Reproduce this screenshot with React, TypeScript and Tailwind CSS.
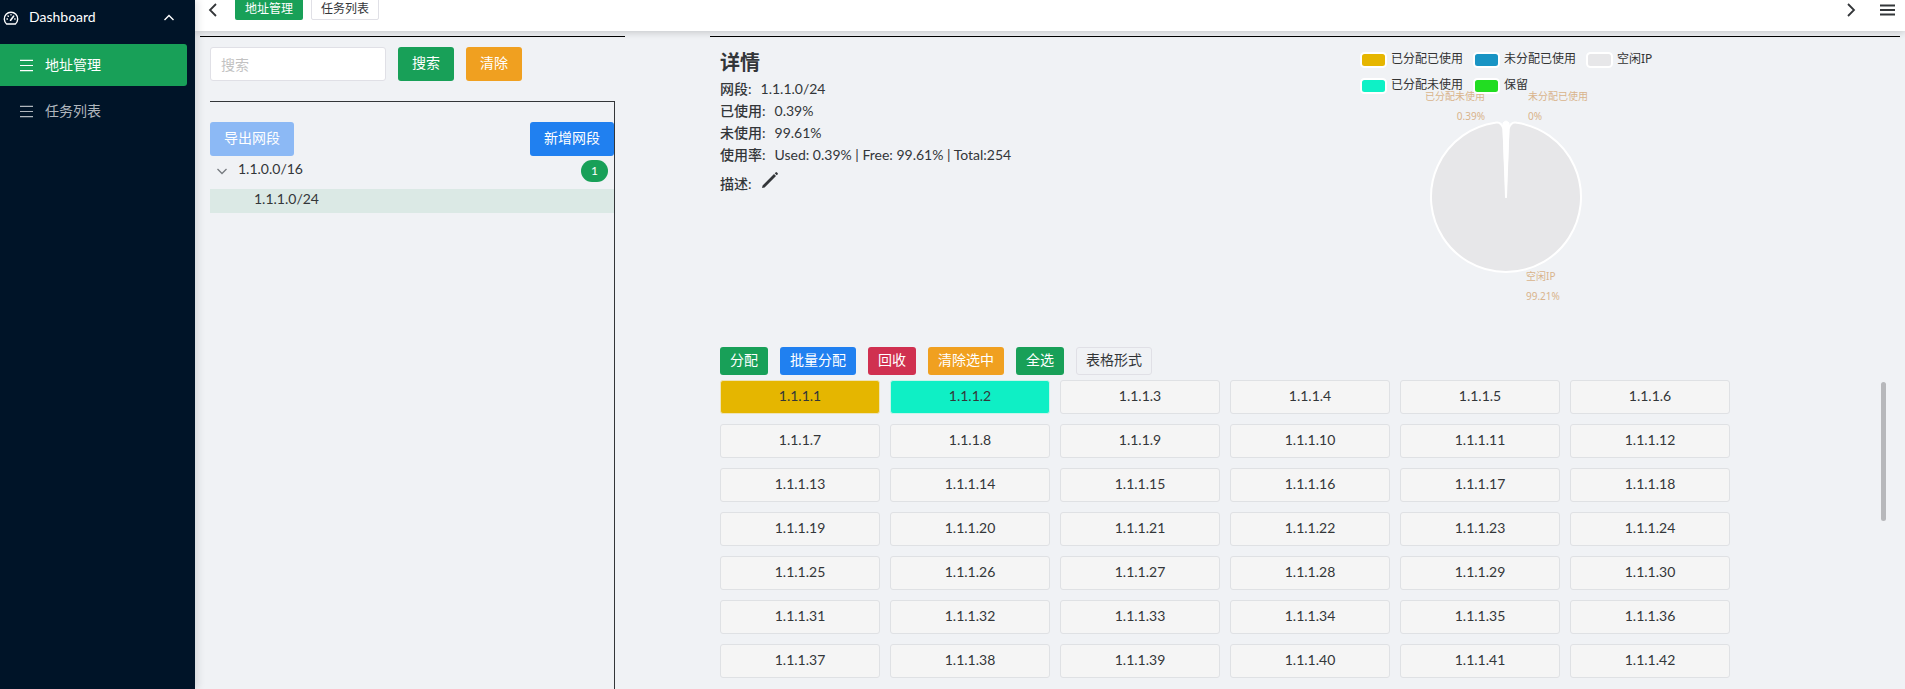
import { useState } from "react";

const hosts = Array.from({ length: 42 }, (_, i) => `1.1.1.${i + 1}`);

const usage = [
  { label: "网段:", value: "1.1.1.0/24" },
  { label: "已使用:", value: "0.39%" },
  { label: "未使用:", value: "99.61%" },
  { label: "使用率:", value: "Used: 0.39% | Free: 99.61% | Total:254" },
];

const actions = [
  { label: "分配", tone: "bg-[#18a058] text-white" },
  { label: "批量分配", tone: "bg-[#2080f0] text-white" },
  { label: "回收", tone: "bg-[#d03050] text-white" },
  { label: "清除选中", tone: "bg-[#f0a020] text-white" },
  { label: "全选", tone: "bg-[#18a058] text-white" },
  { label: "表格形式", tone: "outline -outline-offset-1 outline-[#e0e0e6] text-[#333639]" },
];

const legend = [
  { x: 2, y: 22, color: "#e6b600", label: "已分配已使用" },
  { x: 115, y: 22, color: "#1994c4", label: "未分配已使用" },
  { x: 228, y: 22, color: "#e7e7e9", label: "空闲IP" },
  { x: 2, y: 48, color: "#0ef1c6", label: "已分配未使用" },
  { x: 115, y: 48, color: "#22dd22", label: "保留" },
];

function hostTone(index: number) {
  if (index === 0) return "border-[#eee3b8] bg-[#e5b600] text-[#333639]";
  if (index === 1) return "border-[#c8f5ea] bg-[#0fefc5] text-[#333639]";
  return "border-[#dfe1e4] bg-[#f5f5f5] text-[#333639]";
}

function MenuLines({ className }: { className: string }) {
  return (
    <svg viewBox="0 0 14 14" className={className} stroke="currentColor" strokeWidth="1.3" fill="none" aria-hidden="true">
      <path d="M0 1.5h14M0 7h14M0 12.5h14" />
    </svg>
  );
}

function Gauge() {
  return (
    <svg viewBox="0 0 16 16" className="size-4" stroke="currentColor" strokeWidth="1.4" fill="none" strokeLinecap="round" strokeLinejoin="round" aria-hidden="true">
      <path d="M3.6 14A6.7 6.7 0 1 1 12.4 14Z" />
      <path d="M7.6 10.2L10.6 6.2" strokeWidth="1.7" />
      <path d="M8 4.600v.3M5 5.900l.3.3M4 9h.4M11.700 9h.4" />
    </svg>
  );
}

function Sidebar() {
  return (
    <aside className="relative z-20 w-[195px] shrink-0 bg-[#001428] text-sm shadow-[2px_0_8px_0_rgba(29,35,41,0.15)]">
      <button type="button" className="flex h-9 w-full items-center pr-5 pl-[3px] text-white">
        <Gauge />
        <span className="ml-2.5 pb-0.5">Dashboard</span>
        <svg viewBox="0 0 12 12" className="ml-auto size-3" stroke="currentColor" strokeWidth="1.4" fill="none" aria-hidden="true">
          <path d="M1.500 8l4.500-4.500 4.500 4.500" />
        </svg>
      </button>
      <nav className="flex flex-col gap-1 pt-2 pr-2">
        <a href="#address" className="flex h-[42px] items-center gap-3 rounded-r-[3px] bg-[#18a058] pl-5 text-white">
          <MenuLines className="size-[13px]" />
          地址管理
        </a>
        <a href="#tasks" className="flex h-[42px] items-center gap-3 pl-5 text-[#b0b6bd]">
          <MenuLines className="size-[13px]" />
          任务列表
        </a>
      </nav>
    </aside>
  );
}

function TopBar() {
  return (
    <header className="relative flex h-[31px] shrink-0 items-start bg-white pr-2.5 pl-3 text-xs text-[#333639] shadow-[0_1px_8px_0_rgba(0,0,0,0.2)]">
      <button type="button" aria-label="向左滚动" className="mt-[3px]">
        <svg viewBox="0 0 14 14" className="size-3.5" stroke="currentColor" strokeWidth="1.8" fill="none">
          <path d="M9 1L3 7l6 6" />
        </svg>
      </button>
      <nav className="-mt-0.5 ml-3.5 flex gap-2">
        <a href="#address" className="flex h-[22px] items-center rounded-[2px] bg-[#18a058] px-2.5 text-white">地址管理</a>
        <a href="#tasks" className="flex h-[22px] items-center rounded-[2px] border border-[#e0e0e6] px-[9px]">任务列表</a>
      </nav>
      <button type="button" aria-label="向右滚动" className="mt-[3px] ml-auto">
        <svg viewBox="0 0 14 14" className="size-3.5" stroke="currentColor" strokeWidth="1.8" fill="none">
          <path d="M5 1l6 6-6 6" />
        </svg>
      </button>
      <button type="button" aria-label="菜单" className="mt-[3px] ml-[23px]">
        <svg viewBox="0 0 15 14" className="h-3.5 w-[15px]" stroke="currentColor" strokeWidth="1.8" fill="none">
          <path d="M0 2.5h15M0 7h15M0 11.5h15" />
        </svg>
      </button>
    </header>
  );
}

function SegmentPanel() {
  const [query, setQuery] = useState("");
  return (
    <section className="flex w-1/4 flex-col border-t border-black pt-2.5 pl-2.5">
      <div className="flex gap-3">
        <input
          aria-label="搜索"
          placeholder="搜索"
          value={query}
          onChange={(e) => setQuery(e.target.value)}
          className="h-[34px] w-44 rounded-[3px] border border-[#e0e0e6] bg-white px-2.5 outline-none placeholder:text-[#c2c2c2]"
        />
        <button type="button" className="h-[34px] rounded-[3px] bg-[#18a058] px-3.5 pb-0.5 text-white">搜索</button>
        <button type="button" onClick={() => setQuery("")} className="h-[34px] rounded-[3px] bg-[#f0a020] px-3.5 pb-0.5 text-white">清除</button>
      </div>
      <div className="mt-5 mr-2.5 flex-1 border-t border-r border-[#333639] pt-5">
        <div className="flex justify-between">
          <button type="button" className="h-[34px] rounded-[3px] bg-[#8cb9f5] px-3.5 pb-0.5 text-white">导出网段</button>
          <button type="button" className="h-[34px] rounded-[3px] bg-[#2080f0] px-3.5 pb-0.5 text-white">新增网段</button>
        </div>
        <ul>
          <li>
            <div className="flex h-[33px] items-start pt-1 pr-1.5 pl-1.5">
              <svg viewBox="0 0 12 12" className="mt-[5px] size-3 text-[#777b80]" stroke="currentColor" strokeWidth="1.3" fill="none" aria-hidden="true">
                <path d="M1.5 4L6 8.500l4.500-4.500" />
              </svg>
              <span className="ml-2.5 leading-[18px]">1.1.0.0/16</span>
              <span className="ml-auto flex h-[22px] w-[27px] items-center justify-center rounded-full bg-[#18a058] text-xs text-white">1</span>
            </div>
            <ul>
              <li className="h-6 bg-[#dbe9e5] pl-11 leading-[20px]">1.1.1.0/24</li>
            </ul>
          </li>
        </ul>
      </div>
    </section>
  );
}

function UsageChart() {
  return (
    <svg
      viewBox="0 0 540 300"
      className="h-[300px] w-[540px] shrink-0 font-['Noto_Sans','Noto_Sans_CJK_SC',sans-serif]"
      role="img"
      aria-label="IP 使用情况"
    >
      <g fill="#d9b48c" fontSize="10">
        <text x="125" y="63" textAnchor="end">已分配未使用</text>
        <text x="125" y="83" textAnchor="end">0.39%</text>
        <text x="168" y="63">未分配已使用</text>
        <text x="168" y="83">0%</text>
        <text x="166" y="243">空闲IP</text>
        <text x="166" y="263">99.21%</text>
      </g>
      <path
        d="M146 160L148.500 92Q151 84 157 85.800A75 75 0 1 1 135 85.800Q141 84 143.500 92Z"
        fill="#e7e7e9"
        stroke="#fff"
        strokeWidth="2"
        strokeLinejoin="round"
      />
      <path d="M146 161L143 92L143 86Q146 82 149 86L149 92Z" fill="#fff" stroke="#fff" strokeWidth="1" strokeLinejoin="round" />
      {legend.map((item) => (
        <g key={item.label}>
          <rect x={item.x - 1} y={item.y - 6} width="25" height="14" rx="3.500" fill={item.color} stroke="#fff" strokeWidth="2" />
          <text x={item.x + 29} y={item.y + 4} fontSize="12" fill="#333">{item.label}</text>
        </g>
      ))}
    </svg>
  );
}

function DetailPanel() {
  return (
    <section className="relative ml-[5%] w-[70%] border-t border-black pl-2.5">
      <div className="flex h-[300px] justify-between">
        <div className="pt-2.5">
          <h2 className="text-xl leading-[30px] font-bold">详情</h2>
          <dl className="pt-px">
            {usage.map((row) => (
              <div key={row.label} className="flex h-[22px] items-center gap-[9px]">
                <dt className="font-medium">{row.label}</dt>
                <dd>{row.value}</dd>
              </div>
            ))}
            <div className="flex h-7 items-center gap-[9px]">
              <dt className="pt-2 font-medium">描述:</dt>
              <dd>
                <button type="button" aria-label="编辑描述" className="block">
                  <svg viewBox="0 0 18 18" className="size-[18px]" fill="currentColor">
                    <path d="M1 17l.6-2.600L13 3l2 2L3.600 16.400ZM13.700 2.300l.9-.9a1 1 0 0 1 1.400 0l.6.6a1 1 0 0 1 0 1.400l-.9.9Z" />
                  </svg>
                </button>
              </dd>
            </div>
          </dl>
        </div>
        <UsageChart />
      </div>
      <div className="flex gap-3 pt-2.5">
        {actions.map((a) => (
          <button key={a.label} type="button" className={`flex h-7 items-center justify-center rounded-[3px] px-2.5 pb-0.5 whitespace-nowrap ${a.tone}`}>
            {a.label}
          </button>
        ))}
      </div>
      <div className="mr-[170px] grid grid-cols-6 gap-2.5 pt-[5px]">
        {hosts.map((ip, i) => (
          <button key={ip} type="button" className={`h-[34px] rounded-[3px] border pb-0.5 ${hostTone(i)}`}>
            {ip}
          </button>
        ))}
      </div>
      <div className="absolute top-[345px] right-3.5 h-[139px] w-[5px] rounded-full bg-[#b7b8bb]" />
    </section>
  );
}

export default function App() {
  return (
    <div className="flex h-screen overflow-hidden bg-[#f0f2f5] font-['Lato','Noto_Sans_CJK_SC',sans-serif] text-[#333639]">
      <Sidebar />
      <div className="flex min-w-0 flex-1 flex-col">
        <TopBar />
        <main className="relative flex min-h-0 flex-1 px-[5px] pt-[5px] text-sm">
          <SegmentPanel />
          <DetailPanel />
        </main>
      </div>
    </div>
  );
}
